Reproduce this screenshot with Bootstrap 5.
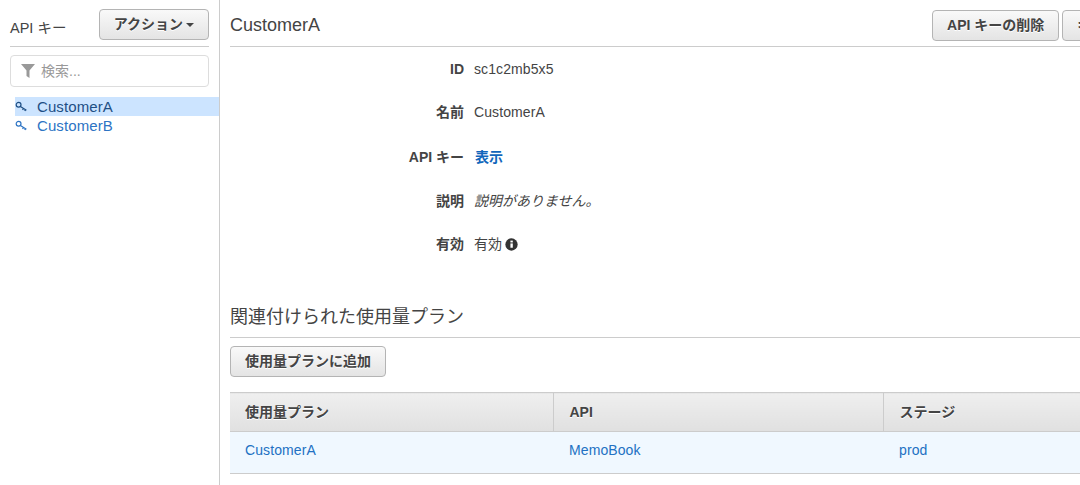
<!DOCTYPE html>
<html lang="ja">
<head>
<meta charset="utf-8">
<title>API キー</title>
<link href="https://cdn.jsdelivr.net/npm/bootstrap@5.3.0/dist/css/bootstrap.min.css" rel="stylesheet">
<style>
html,body{height:485px;overflow:hidden}
body{font-family:"Liberation Sans","Noto Sans CJK JP",sans-serif;font-size:14px;line-height:20px;color:#444;background:#fff}
.shell{width:1080px;height:485px;overflow:hidden}
.side{width:220px;flex:none;border-right:1px solid #ccc;height:485px}
.side-head{margin:9px 10px 0 10px;height:38px;border-bottom:1px solid #ccc}
.side-title{font-size:14.5px;line-height:20px;padding-top:9px;color:#444}
.aws-btn{height:31px;padding:0 14px;border:1px solid #b4b4b4;border-radius:4px;background:linear-gradient(#f9f9f9,#e4e4e4);font-weight:700;font-size:14px;line-height:29px;color:#444;white-space:nowrap;text-shadow:0 1px 0 #fff}
.caret-down{display:inline-block;width:0;height:0;border-left:4px solid transparent;border-right:4px solid transparent;border-top:4px solid #444;vertical-align:middle;margin-left:3px}
.search-box{margin:8px 10px 0;height:32px;border:1px solid #ddd;border-radius:4px;color:#999;padding-left:9px;gap:5px}
.tree{margin:10px 0 0 15px}
.tree-row{height:19px;line-height:19px;color:#2d74c4;font-size:15px;letter-spacing:.1px;padding-left:0;gap:9px}
.tree-row.on{background:#cce4ff;color:#1e4f85}
.main-pane{flex:none;width:1000px;padding-left:10px}
.head-row{height:47px;width:959px;border-bottom:1px solid #ccc;gap:612px}
.head-title{font-size:18px;line-height:24px;padding-top:13px;color:#444}
.head-actions{padding-top:10px;gap:3px}
.dl-row{height:44px}
.dl-key{width:244px;text-align:right;font-weight:700;padding-right:10px;color:#444}
.dl-val{color:#444}
.latin-val{letter-spacing:.1px}
.show-link{color:#1166bb;font-weight:700;padding-left:1px;text-decoration:none}
.details{padding-top:12px}
.info-mark{vertical-align:-2px;margin-left:-1px}
.name-row{height:45px;margin-top:-1px}
.last-row{margin-top:-1px}
.sub-title{font-size:18px;line-height:24px;color:#444;margin-top:26px;height:34px;padding-top:1px;width:959px;border-bottom:1px solid #ccc}
.add-btn{margin-top:8px}
.plan-grid{width:959px;margin-top:15px;border-collapse:collapse;table-layout:fixed}
.plan-grid th{height:39px;padding:0 15px;background:linear-gradient(#efefef,#e0e0e0);border-top:1px solid #ccc;border-bottom:1px solid #ccc;border-right:1px solid #ccc;font-size:14px;text-shadow:0 1px 0 #fff}
.plan-grid td{height:42px;padding:0 15px 5px;background:#f0f8ff;border-bottom:1px solid #ccc;letter-spacing:.1px}
.plan-grid th+th,.plan-grid td+td{padding-left:16px}
.plan-grid a{color:#2271c3;text-decoration:none}
</style>
</head>
<body>
<div class="shell d-flex">
  <aside class="side">
    <div class="side-head d-flex justify-content-between">
      <div class="side-title">API キー</div>
      <button type="button" class="aws-btn">アクション<span class="caret-down"></span></button>
    </div>
    <div class="search-box d-flex align-items-center">
      <svg width="16" height="16" viewBox="0 0 16 16" aria-hidden="true"><path d="M1 1h14L9.5 7.5V15l-3-2V7.5z" fill="#999"/></svg>
      <span>検索...</span>
    </div>
    <div class="tree">
      <div class="tree-row on d-flex align-items-center">
        <svg width="13" height="12" viewBox="0 0 13 12" fill="none" stroke="currentColor" stroke-width="1.2" aria-hidden="true"><circle cx="3.6" cy="3.8" r="2.4"/><path d="M5.4 5.4l6 3.8M8.4 7.4L7.6 9M10.4 8.6L9.8 10"/></svg>
        <span>CustomerA</span>
      </div>
      <div class="tree-row d-flex align-items-center">
        <svg width="13" height="12" viewBox="0 0 13 12" fill="none" stroke="currentColor" stroke-width="1.2" aria-hidden="true"><circle cx="3.6" cy="3.8" r="2.4"/><path d="M5.4 5.4l6 3.8M8.4 7.4L7.6 9M10.4 8.6L9.8 10"/></svg>
        <span>CustomerB</span>
      </div>
    </div>
  </aside>
  <main class="main-pane">
    <div class="head-row d-flex">
      <div class="head-title">CustomerA</div>
      <div class="head-actions d-flex">
        <button type="button" class="aws-btn">API キーの削除</button>
        <button type="button" class="aws-btn">キーの編集</button>
      </div>
    </div>
    <div class="details">
      <div class="dl-row d-flex"><div class="dl-key">ID</div><div class="dl-val latin-val">sc1c2mb5x5</div></div>
      <div class="dl-row d-flex name-row"><div class="dl-key">名前</div><div class="dl-val latin-val">CustomerA</div></div>
      <div class="dl-row d-flex"><div class="dl-key">API キー</div><div class="dl-val"><a class="show-link" href="#">表示</a></div></div>
      <div class="dl-row d-flex"><div class="dl-key">説明</div><div class="dl-val fst-italic">説明がありません。</div></div>
      <div class="dl-row d-flex last-row"><div class="dl-key">有効</div><div class="dl-val">有効 <svg class="info-mark" width="13" height="13" viewBox="0 0 12 12" aria-hidden="true"><circle cx="6" cy="6" r="5.7" fill="#333"/><rect x="5" y="5" width="2.2" height="4" fill="#fff"/><rect x="5" y="2.4" width="2.2" height="1.7" fill="#fff"/></svg></div></div>
    </div>
    <div class="sub-title">関連付けられた使用量プラン</div>
    <button type="button" class="aws-btn add-btn">使用量プランに追加</button>
    <table class="plan-grid">
      <colgroup><col style="width:323px"><col style="width:330px"><col></colgroup>
      <thead><tr><th>使用量プラン</th><th>API</th><th>ステージ</th></tr></thead>
      <tbody><tr><td><a href="#">CustomerA</a></td><td><a href="#">MemoBook</a></td><td><a href="#">prod</a></td></tr></tbody>
    </table>
  </main>
</div>
<script src="https://cdn.jsdelivr.net/npm/bootstrap@5.3.0/dist/js/bootstrap.bundle.min.js"></script>
</body>
</html>
